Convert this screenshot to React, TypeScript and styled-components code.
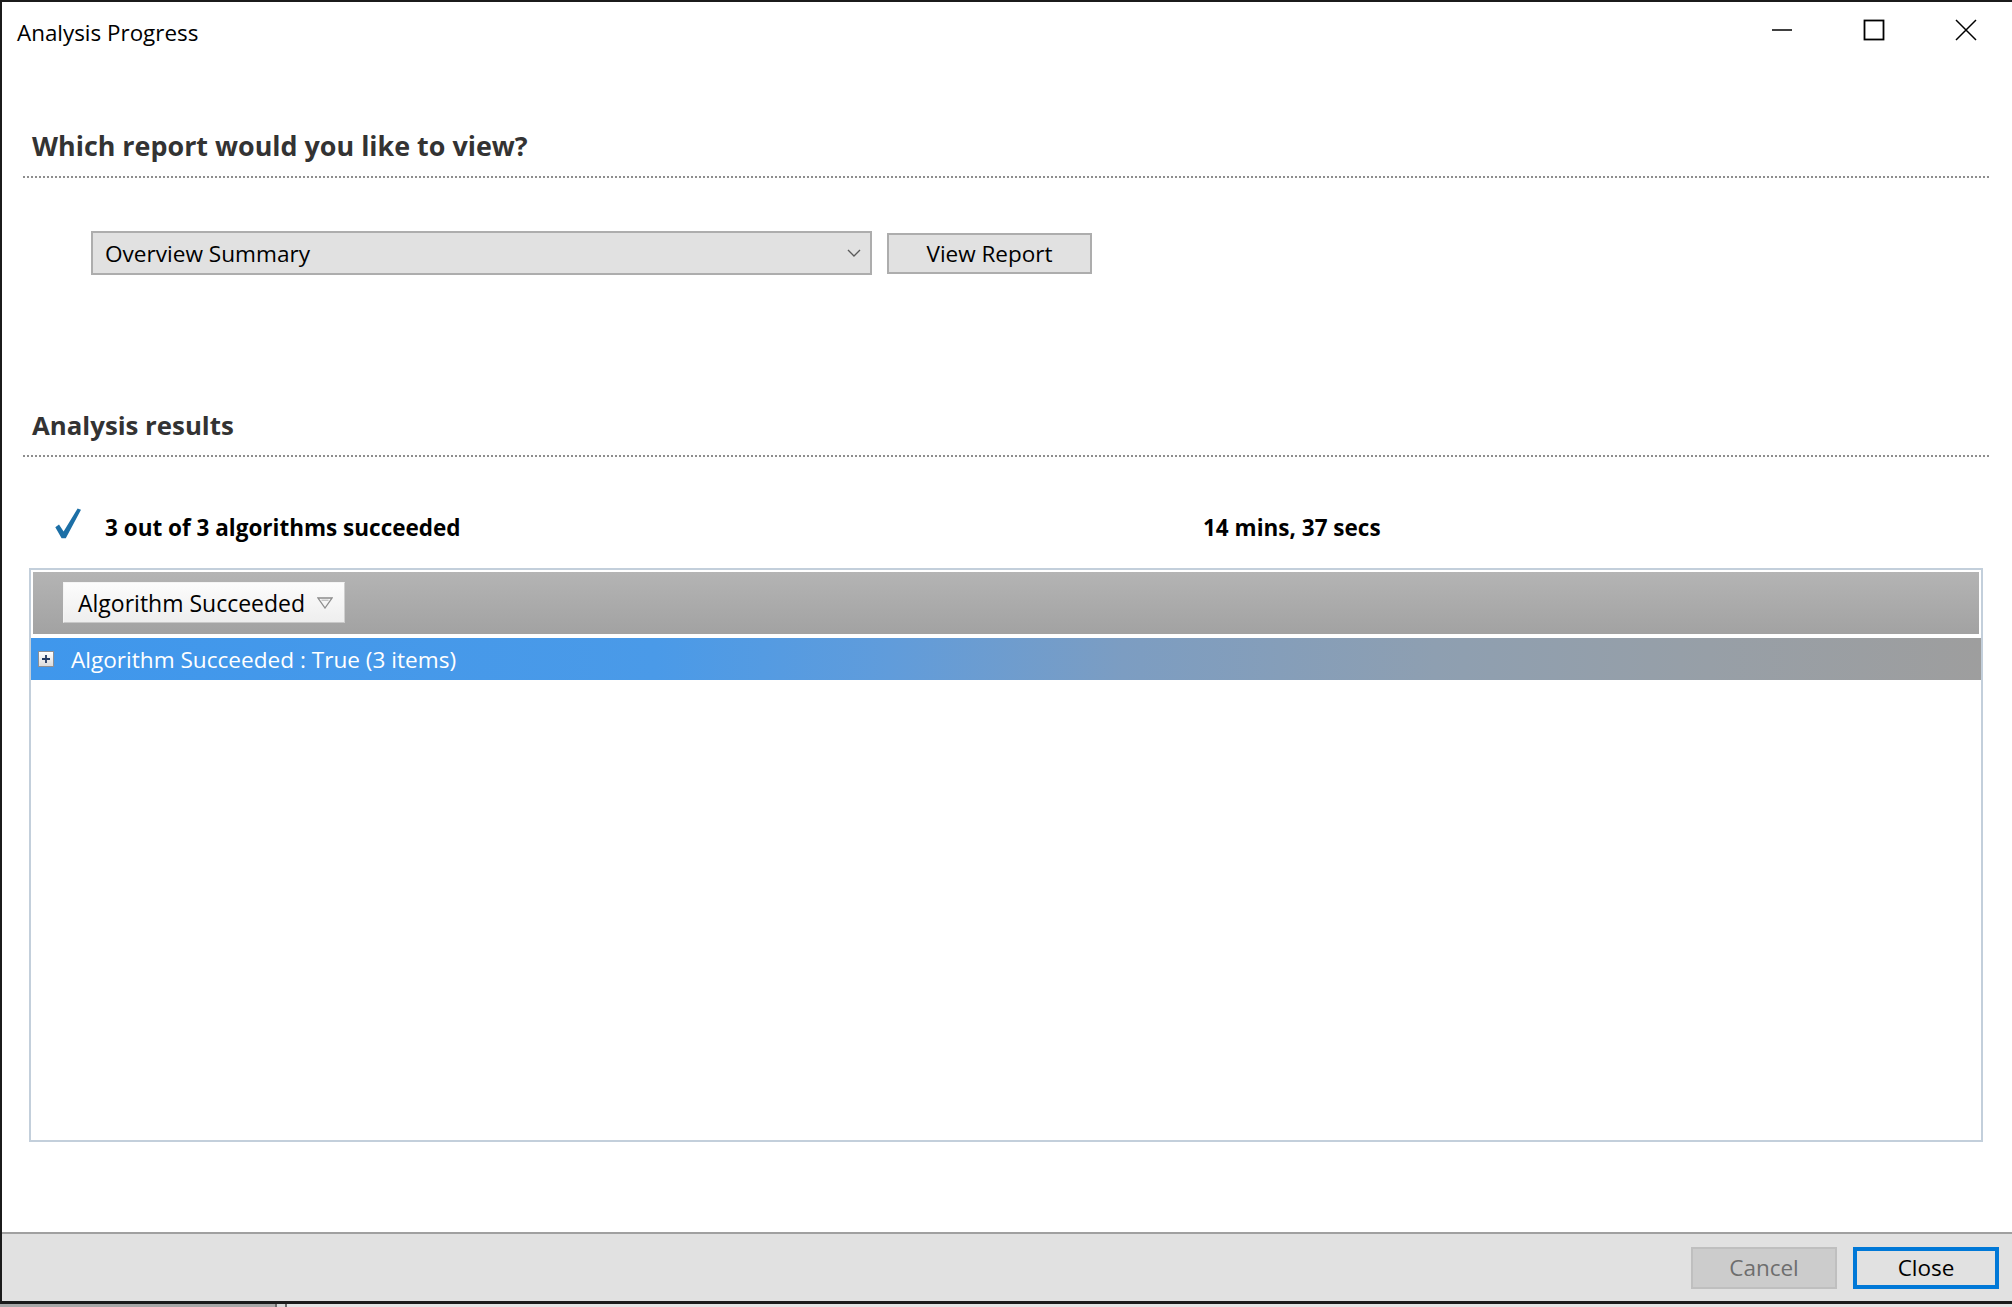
import React from "react";
import styled, { createGlobalStyle } from "styled-components";

const GlobalStyle = createGlobalStyle`
  html, body { margin: 0; padding: 0; background: #ffffff; }
  body { font-family: "Open Sans", "Noto Sans", sans-serif; color: #000; }
  * { box-sizing: border-box; }
`;

const Page = styled.div`
  width: 2012px;
  height: 1307px;
  display: flex;
  flex-direction: column;
  overflow: hidden;
`;

const Window = styled.div`
  height: 1304px;
  display: flex;
  flex-direction: column;
  background: #ffffff;
  border-top: 2px solid #1b1b1b;
  border-left: 2px solid #1b1b1b;
  border-bottom: 3px solid #1b1b1b;
`;

const BehindStrip = styled.div`
  flex: 1;
  background: linear-gradient(
    to right,
    #a7a7a7 0px,
    #a7a7a7 275px,
    #6a6a6a 275px,
    #6a6a6a 277px,
    #d8d8d8 277px,
    #d8d8d8 285px,
    #6a6a6a 285px,
    #6a6a6a 287px,
    #e3e3e3 287px
  );
`;

const TitleBar = styled.div`
  height: 58px;
  display: flex;
  align-items: flex-start;
  flex-shrink: 0;
`;

const TitleText = styled.div`
  flex: 1;
  align-self: center;
  padding: 2px 0 0 15px;
  font-size: 22.4px;
  color: #000;
`;

const CaptionButton = styled.div`
  width: 92px;
  height: 56px;
  display: flex;
  align-items: center;
  justify-content: center;
`;

const Body = styled.div`
  flex: 1;
  display: flex;
  flex-direction: column;
  padding: 0 23px 0 21px;
`;

const SectionHeader = styled.div<{ $top: number }>`
  margin-top: ${(p) => p.$top}px;
  display: flex;
  flex-direction: column;
`;

const HeadingText = styled.div<{ $size: number }>`
  font-weight: 700;
  font-size: ${(p) => p.$size}px;
  line-height: 36px;
  color: #333333;
  padding: 0 0 12px 9px;
`;

const DottedRule = styled.div`
  height: 2px;
  background: repeating-linear-gradient(
    to right,
    #8e8e8e 0px,
    #8e8e8e 2px,
    transparent 2px,
    transparent 4px
  );
`;

const ReportRow = styled.div`
  margin-top: 53px;
  height: 44px;
  padding-left: 68px;
  display: flex;
  align-items: center;
  gap: 15px;
`;

const Select = styled.div`
  width: 781px;
  height: 44px;
  background: #e1e1e1;
  border: 2px solid #adadad;
  display: flex;
  align-items: center;
  padding: 0 9px 0 12px;
  font-size: 22.6px;
`;

const SelectValue = styled.span`
  flex: 1;
`;

const Button = styled.div<{ $w: number; $h: number; $variant?: "default" | "disabled" | "primary" }>`
  width: ${(p) => p.$w}px;
  height: ${(p) => p.$h}px;
  display: flex;
  align-items: center;
  justify-content: center;
  font-size: 22.5px;
  background: ${(p) => (p.$variant === "disabled" ? "#cccccc" : "#e1e1e1")};
  border: ${(p) =>
    p.$variant === "primary"
      ? "4px solid #0078d7"
      : p.$variant === "disabled"
      ? "2px solid #bfbfbf"
      : "2px solid #adadad"};
  color: ${(p) => (p.$variant === "disabled" ? "#6e6e6e" : "#000")};
`;

const StatusRow = styled.div`
  margin-top: 49px;
  height: 40px;
  padding-left: 32px;
  display: grid;
  grid-template-columns: 1148px auto;
  align-items: center;
`;

const StatusLeft = styled.div`
  display: flex;
  align-items: center;
  gap: 24px;
`;

const StatusText = styled.span`
  font-weight: 700;
  font-size: 22.5px;
  line-height: 40px;
  padding-top: 2px;
  color: #000;
`;

const Grid = styled.div`
  margin: 22px 6px 0;
  height: 574px;
  border: 2px solid #c3cfdb;
  background: #ffffff;
  display: flex;
  flex-direction: column;
`;

const GroupPanel = styled.div`
  margin: 2px 2px 4px 2px;
  height: 62px;
  background: linear-gradient(to bottom, #b4b4b4, #a2a2a2);
  display: flex;
  align-items: flex-start;
  padding: 10px 0 0 30px;
`;

const GroupChip = styled.div`
  width: 282px;
  height: 41px;
  display: flex;
  align-items: center;
  justify-content: space-between;
  padding: 0 11px 0 14px;
  background: linear-gradient(to bottom, #fcfcfc, #eeeeee);
  border: 1px solid #f4f4f4;
  border-right-color: #cfcfcf;
  border-bottom-color: #c8c8c8;
  font-size: 23px;
  color: #000;
`;

const GroupRow = styled.div`
  height: 42px;
  display: flex;
  align-items: center;
  padding-left: 7px;
  gap: 17px;
  background: linear-gradient(
    to right,
    #3f97ec 0%,
    #4a9ae8 32%,
    #609cdb 44%,
    #7c9dc2 56%,
    #8e9fb1 72%,
    #979fa7 86%,
    #9e9e9e 100%
  );
  color: #ffffff;
  font-size: 22.6px;
`;

const Expander = styled.div`
  width: 16px;
  height: 16px;
  border: 1px solid #8b8f96;
  background: linear-gradient(to bottom, #ffffff, #dcdcdc);
  display: flex;
  align-items: center;
  justify-content: center;
`;

const Spacer = styled.div`
  flex: 1;
`;

const Footer = styled.div`
  height: 69px;
  flex-shrink: 0;
  border-top: 2px solid #a0a0a0;
  background: #e1e1e1;
  display: flex;
  align-items: center;
  justify-content: flex-end;
  padding-right: 13px;
  gap: 16px;
`;

const Chevron = () => (
  <svg width="14" height="8" viewBox="0 0 14 8">
    <path d="M1 1 L7 7 L13 1" fill="none" stroke="#5a5a5a" strokeWidth="1.4" />
  </svg>
);

const CheckMark = () => (
  <svg width="26" height="40" viewBox="0 0 26 40">
    <path d="M0.3 20.2 L4 17.6 L8.6 24.6 L22.6 1.6 L26 2.8 L10.8 31.2 L6.6 31.2 Z" fill="#1c6fa6" />
  </svg>
);

const FilterIcon = () => (
  <svg width="16" height="12" viewBox="0 0 16 12">
    <path d="M1 1 H15 L8 11 Z" fill="none" stroke="#8d8d8d" strokeWidth="1.3" />
    <path d="M4.5 3.2 H11.5" stroke="#b0b0b0" strokeWidth="1" />
  </svg>
);

const PlusIcon = () => (
  <svg width="10" height="10" viewBox="0 0 10 10">
    <path d="M1 5 H9 M5 1 V9" stroke="#233a62" strokeWidth="1.8" />
  </svg>
);

export default function App() {
  return (
    <Page>
      <GlobalStyle />
      <Window>
        <TitleBar>
          <TitleText>Analysis Progress</TitleText>
          <CaptionButton>
            <svg width="22" height="22" viewBox="0 0 22 22">
              <path d="M1 11 H21" stroke="#000" strokeWidth="1.5" />
            </svg>
          </CaptionButton>
          <CaptionButton>
            <svg width="22" height="22" viewBox="0 0 22 22">
              <rect x="1.5" y="1.5" width="19" height="19" fill="none" stroke="#000" strokeWidth="1.8" />
            </svg>
          </CaptionButton>
          <CaptionButton>
            <svg width="22" height="22" viewBox="0 0 22 22">
              <path d="M1 1 L21 21 M21 1 L1 21" stroke="#000" strokeWidth="1.5" />
            </svg>
          </CaptionButton>
        </TitleBar>

        <Body>
          <SectionHeader $top={68}>
            <HeadingText $size={26.9}>Which report would you like to view?</HeadingText>
            <DottedRule />
          </SectionHeader>

          <ReportRow>
            <Select>
              <SelectValue>Overview Summary</SelectValue>
              <Chevron />
            </Select>
            <Button $w={205} $h={41}>
              View Report
            </Button>
          </ReportRow>

          <SectionHeader $top={132}>
            <HeadingText $size={25.8}>Analysis results</HeadingText>
            <DottedRule />
          </SectionHeader>

          <StatusRow>
            <StatusLeft>
              <CheckMark />
              <StatusText>3 out of 3 algorithms succeeded</StatusText>
            </StatusLeft>
            <StatusText>14 mins, 37 secs</StatusText>
          </StatusRow>

          <Grid>
            <GroupPanel>
              <GroupChip>
                <span>Algorithm Succeeded</span>
                <FilterIcon />
              </GroupChip>
            </GroupPanel>
            <GroupRow>
              <Expander>
                <PlusIcon />
              </Expander>
              <span>Algorithm Succeeded : True (3 items)</span>
            </GroupRow>
          </Grid>

          <Spacer />
        </Body>

        <Footer>
          <Button $w={146} $h={42} $variant="disabled">
            Cancel
          </Button>
          <Button $w={146} $h={42} $variant="primary">
            Close
          </Button>
        </Footer>
      </Window>
      <BehindStrip />
    </Page>
  );
}
